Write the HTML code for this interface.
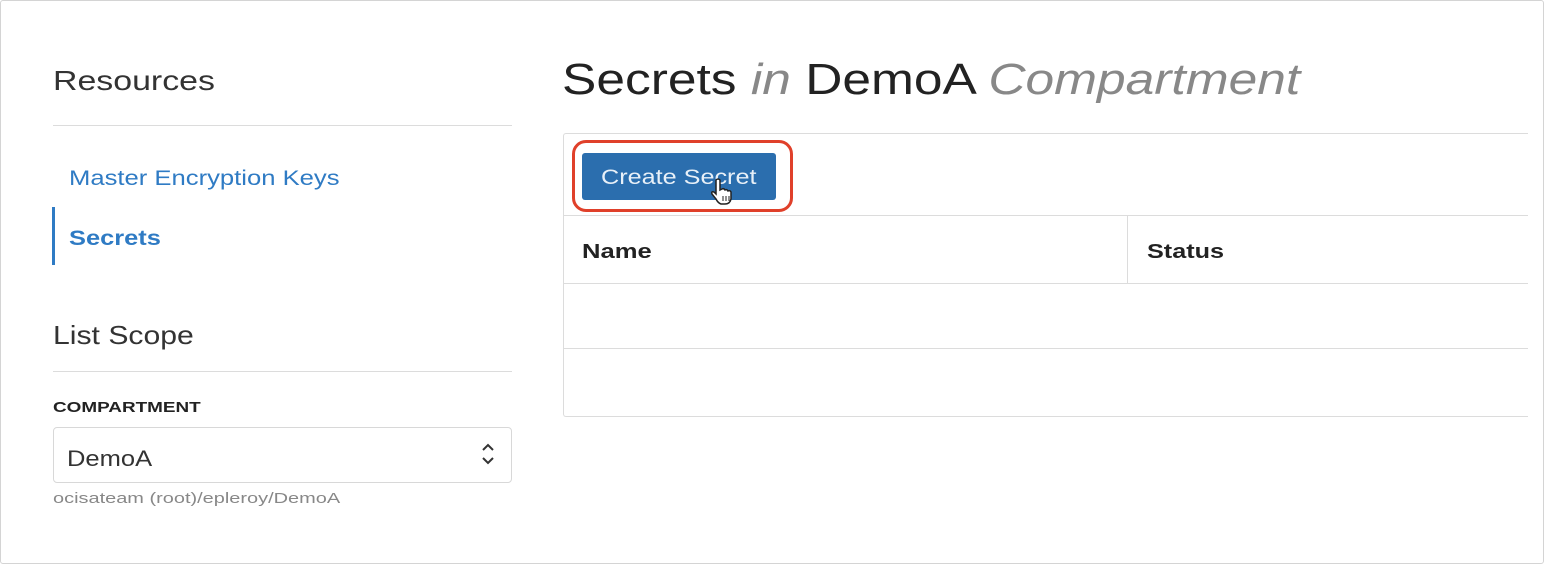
<!DOCTYPE html>
<html><head><meta charset="utf-8"><style>
*{margin:0;padding:0;box-sizing:border-box}
html,body{width:1544px;height:564px;overflow:hidden;background:#fff;font-family:"Liberation Sans",sans-serif}
.frame{position:absolute;left:0;top:0;width:1544px;height:564px;border:1px solid #d4d4d4;border-radius:3px}
.abs{position:absolute;white-space:nowrap;transform-origin:0 0}
.hr{position:absolute;height:1px;background:#dcdcdc}
</style></head><body>
<div class="frame"></div>
<div class="abs" style="left:53px;top:65px;font-size:28px;color:#333;transform:scaleX(1.21)">Resources</div>
<div class="hr" style="left:53px;top:125px;width:459px"></div>
<div class="abs" style="left:69px;top:167px;font-size:21px;color:#2f7bc4;transform:scaleX(1.22)">Master Encryption Keys</div>
<div style="position:absolute;left:52px;top:207px;width:3px;height:58px;background:#2f7bc4"></div>
<div class="abs" style="left:69px;top:227px;font-size:21px;color:#2f7bc4;font-weight:bold;transform:scaleX(1.21)">Secrets</div>
<div class="abs" style="left:53px;top:320px;font-size:26px;color:#333;transform:scaleX(1.16)">List Scope</div>
<div class="hr" style="left:53px;top:371px;width:459px"></div>
<div class="abs" style="left:53px;top:399px;font-size:15px;color:#222;font-weight:bold;transform:scaleX(1.26)">COMPARTMENT</div>
<div style="position:absolute;left:53px;top:427px;width:459px;height:56px;border:1px solid #d8d8d8;border-radius:4px"></div>
<div class="abs" style="left:67px;top:446px;font-size:22px;color:#333;transform:scaleX(1.16)">DemoA</div>
<svg class="abs" style="left:480px;top:441px" width="16" height="26" viewBox="0 0 16 26"><path d="M3 9 L8 4 L13 9 M3 17 L8 22 L13 17" fill="none" stroke="#333" stroke-width="2"/></svg>
<div class="abs" style="left:53px;top:490px;font-size:15px;color:#888;transform:scaleX(1.33)">ocisateam (root)/epleroy/DemoA</div>

<div class="abs" style="left:562px;top:55px;font-size:44px;color:#222;transform:scaleX(1.17)">Secrets <i style="color:#888">in</i> DemoA <i style="color:#888">Compartment</i></div>
<div style="position:absolute;left:563px;top:133px;width:965px;height:284px;border:1px solid #dcdcdc;border-right:none;border-radius:3px 0 0 3px"></div>
<div class="hr" style="left:564px;top:215px;width:964px"></div>
<div class="hr" style="left:564px;top:283px;width:964px"></div>
<div class="hr" style="left:564px;top:348px;width:964px"></div>
<div style="position:absolute;left:1127px;top:216px;width:1px;height:67px;background:#dcdcdc"></div>
<div class="abs" style="left:582px;top:241px;font-size:20px;font-weight:bold;color:#222;transform:scaleX(1.28)">Name</div>
<div class="abs" style="left:1147px;top:241px;font-size:20px;font-weight:bold;color:#222;transform:scaleX(1.26)">Status</div>
<div style="position:absolute;left:572px;top:140px;width:221px;height:72px;border:3px solid #e0402a;border-radius:14px"></div>
<div style="position:absolute;left:582px;top:153px;width:194px;height:47px;background:#2b6eae;border-radius:3px"></div>
<div class="abs" style="left:601px;top:166px;font-size:21px;color:#e8f0f8;transform:scaleX(1.2)">Create Secret</div>
<svg class="abs" style="left:708px;top:177px" width="30" height="30" viewBox="0 0 30 30"><path d="M8 3 Q10 1 12 3 L12 13 L14 12 Q16 11 17 13 Q19 12 20 14 Q22 13 23 15 L23 22 Q22 27 17 27 L13 27 Q10 26 8 22 L4 17 Q3 14 6 15 L8 17 Z" fill="#fff" stroke="#222" stroke-width="1.5"/><path d="M15 19v5M18 19v5M21 19v5" stroke="#222" stroke-width="1"/></svg>
</body></html>
